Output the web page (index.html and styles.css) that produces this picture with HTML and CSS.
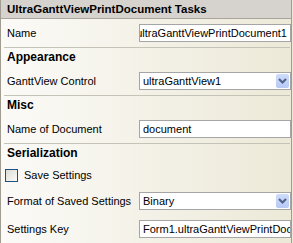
FILE: index.html
```html
<!DOCTYPE html>
<html lang="en">
<head>
    <meta charset="UTF-8">
    <title>UltraGanttViewPrintDocument Tasks</title>
    <link rel="stylesheet" href="styles.css">
</head>
<body>
    <div class="panel">
        <div class="title">UltraGanttViewPrintDocument Tasks</div>

        <div class="row">
            <span class="label">Name</span>
            <div class="box box-end"><span>ultraGanttViewPrintDocument1</span></div>
        </div>
        <div class="sep"></div>

        <div class="heading">Appearance</div>
        <div class="row">
            <span class="label">GanttView Control</span>
            <div class="box combo">
                <span class="value">ultraGanttView1</span>
                <span class="drop"><svg width="9" height="6" viewBox="0 0 9 6"><path d="M1 1 L4.5 4.5 L8 1" fill="none" stroke="#4d6185" stroke-width="2"/></svg></span>
            </div>
        </div>
        <div class="sep"></div>

        <div class="heading">Misc</div>
        <div class="row">
            <span class="label">Name of Document</span>
            <div class="box"><span>document</span></div>
        </div>
        <div class="sep"></div>

        <div class="heading">Serialization</div>
        <div class="check-row">
            <span class="checkbox"></span>
            <span>Save Settings</span>
        </div>
        <div class="row">
            <span class="label">Format of Saved Settings</span>
            <div class="box combo">
                <span class="value">Binary</span>
                <span class="drop"><svg width="9" height="6" viewBox="0 0 9 6"><path d="M1 1 L4.5 4.5 L8 1" fill="none" stroke="#4d6185" stroke-width="2"/></svg></span>
            </div>
        </div>
        <div class="row">
            <span class="label">Settings Key</span>
            <div class="box"><span>Form1.ultraGanttViewPrintDocument1</span></div>
        </div>
    </div>
</body>
</html>
```

FILE: styles.css
```css
body {
    margin: 0;
    font-family: "Liberation Sans", Arial, sans-serif;
    font-size: 11px;
    color: #000;
    background: #ece9d8;
}

.panel {
    width: 290px;
    height: 243px;
    border-left: 1px solid #a09c92;
    border-right: 1px solid #a09c92;
    background: linear-gradient(to right, #fbfaf7, #ece9d8);
    overflow: hidden;
}

.title {
    height: 18px;
    line-height: 18px;
    padding-left: 6px;
    font-weight: bold;
    font-size: 11.5px;
    background: #d6d3ce;
    border-bottom: 1px solid #a8a59c;
}

.row {
    display: flex;
    align-items: center;
    height: 28px;
    padding-left: 6px;
}

.label {
    width: 132px;
    flex-shrink: 0;
    white-space: nowrap;
}

/* text and combo boxes */
.box {
    display: flex;
    align-items: center;
    width: 148px;
    height: 16px;
    border: 1px solid #a5a5a5;
    background: #fff;
    overflow: hidden;
    white-space: nowrap;
    padding-left: 3px;
}

.box-end {
    justify-content: flex-end;
    padding-left: 0;
    padding-right: 3px;
}

.combo {
    padding-right: 1px;
    width: 147px;
}

.combo .value {
    flex: 1;
}

.drop {
    display: flex;
    align-items: center;
    justify-content: center;
    width: 13px;
    height: 14px;
    border-radius: 2px;
    background: linear-gradient(#cfdcfb, #b6c9f6);
}

.sep {
    height: 1px;
    margin: 0 1px 0 3px;
    background: #c5c2b8;
}

.heading {
    height: 19px;
    line-height: 19px;
    padding-left: 6px;
    font-weight: bold;
    font-size: 12px;
}

.check-row {
    display: flex;
    align-items: center;
    gap: 6px;
    height: 24px;
    padding-left: 4px;
}

.checkbox {
    width: 11px;
    height: 11px;
    border: 1px solid #1c5180;
    background: linear-gradient(135deg, #dcdbd5, #fbfbf9);
}
```
